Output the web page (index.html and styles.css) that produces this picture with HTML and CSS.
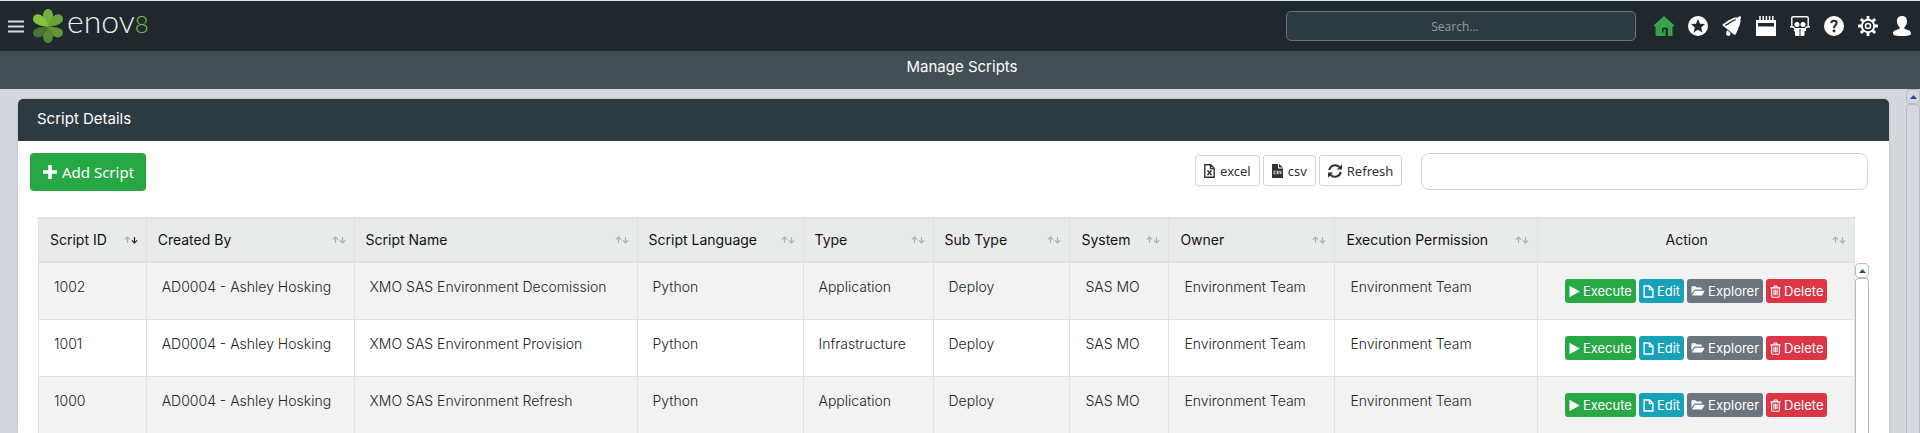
FILE: index.html
```html
<!DOCTYPE html>
<html lang="en">
<head>
<meta charset="utf-8">
<title>Manage Scripts</title>
<link rel="stylesheet" href="styles.css">
</head>
<body>
<svg class="defs" aria-hidden="true">
  <symbol id="play" viewBox="0 0 12 14"><path d="M.5.8v12.4L11.6 7z" fill="currentColor"/></symbol>
  <symbol id="file" viewBox="0 0 12 14"><path d="M1.2 1h6l3.6 3.7V13H1.2zM7 1v4h3.8" fill="none" stroke="currentColor" stroke-width="1.5"/></symbol>
  <symbol id="folder" viewBox="0 0 15 12"><path d="M.5 9V2q0-1 1-1h3.4l1.2 1.3h4.5q1 0 1 1v1.2H4.7q-1 0-1.600.8z" fill="currentColor"/><path d="M1 10.800 3.600 6.500q.4-.7 1.200-.7h9.200q.8 0 .4.7l-2.300 3.700q-.4.6-1.200.6z" fill="currentColor"/></symbol>
  <symbol id="trash" viewBox="0 0 12 14"><path d="M.5 3h11M3.800 2.800 4.600 1h2.800l.8 1.800M1.800 3v9q0 1.200 1 1.200h6.400q1 0 1-1.200V3M4.300 5.200v5.800M6 5.200v5.800M7.700 5.200v5.800" fill="none" stroke="currentColor" stroke-width="1.2"/></symbol>
  <symbol id="up" viewBox="0 0 14 8"><path d="M3.500 7V1M.8 3.600 3.500 1l2.700 2.600" fill="none" stroke="currentColor" stroke-width="1.2"/></symbol>
  <symbol id="down" viewBox="0 0 14 8"><path d="M10.500 1v6M7.800 4.400 10.500 7l2.700-2.600" fill="none" stroke="currentColor" stroke-width="1.2"/></symbol>
</svg>

<header class="topbar">
  <button class="menu" aria-label="Menu"><svg viewBox="0 0 16 13"><path d="M0 1.500h16M0 6.500h16M0 11.500h16" stroke="#dcdcde" stroke-width="2"/></svg></button>
  <a class="brand" href="#" aria-label="enov8 home">
    <svg class="flower" viewBox="0 0 30 34">
      <path d="M15 18C9 12 9.500 9 10.300 4.500 11-1.500 19-1.500 19.700 4.500 20.500 9 21 12 15 18z" fill="#74ad3b"/>
      <path d="M15 18C16 9 22 5.500 25 5.300 30 5.300 31.500 11 28.500 13.500 24 17 20 17 15 18z" fill="#6aa039"/>
      <path d="M15 18C20 17.500 25 18.500 28.500 20.500 31.500 23.500 29.500 28.500 25 28.500 20 28 17 24 15 18z" fill="#629538"/>
      <path d="M15 18C9 22 9.500 25 10.500 30 11.500 35.300 18.500 35.300 19.500 30 20.500 25 21 22 15 18z" fill="#578a36"/>
      <path d="M15 18C10 17.500 5 18.500 1.500 20.500-1.500 23.500.5 28.500 5 28.500 10 28 13 24 15 18z" fill="#4a7335"/>
      <path d="M15 18C14 9 8 5.500 5 5.300 0 5.300-1.500 11 1.500 13.500 6 17 10 17 15 18z" fill="#86c440"/>
    </svg>
    <span class="word">enov<span class="eight">8</span></span>
  </a>
  <input class="search" type="search" placeholder="Search..." aria-label="Search">
  <nav class="tools">
    <a class="home" href="#" aria-label="Home"><svg viewBox="0 0 20 20"><path fill="currentColor" d="M10 0 20 9v1.600h-1.500V20H14v-7q0-1.500-1.500-1.500h-3Q8 11.500 8 13v3.500h1.500V13.200h2V20H3q-1.500 0-1.500-1.500v-7.900H0V9z"/></svg></a>
    <a href="#" aria-label="Favourites"><svg viewBox="0 0 20 20"><circle cx="10" cy="10" r="10" fill="currentColor"/><path fill="#20282e" d="m10 3 2 4.700 5 .4-3.800 3.300 1.200 5L10 13.700l-4.400 2.700 1.200-5L3 8.100l5-.4z"/></svg></a>
    <a href="#" aria-label="Notifications"><svg viewBox="0 0 20 20"><path fill="currentColor" d="M.8 8.200C5 5.600 9.500 2 13.500 1.500q1.300-.3 2.300.2Q17-.2 18.600.4 19.800 1.400 18.300 3.200 19 5.500 17.600 9 16 13.500 13.800 18.200q-1.300 1-2.300 0L1 9.800Q.2 9 .8 8.200z"/><path d="M3.200 9.300C8 8 9.500 4.300 13.800 3.600" stroke="#20282e" stroke-width="1.300" fill="none"/><path fill="currentColor" d="m5.300 14.300 3.200 2.700q.2 2.700-2.200 3-2.300-.2-2.200-2.500.1-1.800 1.200-3.200z"/></svg></a>
    <a href="#" aria-label="Calendar"><svg viewBox="0 0 20 20"><path fill="currentColor" fill-rule="evenodd" d="M0 4h20v16H0zm2 3v3.500h16V7z"/><path d="M4 0v7M7.200 0v7M10.400 0v7M13.600 0v7M16.800 0v7" stroke="currentColor" stroke-width="1.500"/></svg></a>
    <a href="#" aria-label="Slides"><svg viewBox="0 0 20 20"><path fill="none" stroke="currentColor" stroke-width="1.400" d="M1.800 11V2q0-1.200 1.200-1.200h14q1.200 0 1.200 1.200v9M0 10.800q3.500 0 4.700 1.200M20 10.800q-3.500 0-4.700 1.200"/><circle cx="7" cy="8.500" r="2.500" fill="currentColor"/><circle cx="13" cy="8.500" r="2.500" fill="currentColor"/><path fill="currentColor" d="M4 12h12v3l-1.500.5V19q0 1-1.500 1h-2.500v-7h-1v7H6.500Q5 20 5 19v-3.500L4 15z"/></svg></a>
    <a href="#" aria-label="Help"><svg viewBox="0 0 20 20"><circle cx="10" cy="10" r="10" fill="currentColor"/><path d="M7.300 7.200Q7.500 4.800 10 4.800t2.600 2.200C12.600 9.200 10 9 10 12.200" fill="none" stroke="#20282e" stroke-width="2"/><circle cx="10" cy="15" r="1.400" fill="#20282e"/></svg></a>
    <a href="#" aria-label="Settings"><svg viewBox="0 0 20 20"><g fill="none" stroke="currentColor"><path stroke-width="2.800" d="M10 0v4M10 16v4M0 10h4M16 10h4M2.900 2.900l2.800 2.800M14.300 14.300l2.800 2.800M2.900 17.100l2.800-2.800M14.300 5.700l2.800-2.800"/><circle cx="10" cy="10" r="6.200" stroke-width="2"/><circle cx="10" cy="10" r="2.500" stroke-width="1.600"/></g></svg></a>
    <a href="#" aria-label="Account"><svg viewBox="0 0 20 20"><path fill="currentColor" d="M10 0c3.500 0 5 2.200 5 5.300 0 2.800-1.200 4.400-2.600 6.200v1.300C15 14 19 14.200 19 17.500 19 19.500 15 20 10 20s-9-.5-9-2.500c0-3.300 4-3.500 6.600-4.700v-1.300C6.200 9.700 5 8.100 5 5.300 5 2.200 6.500 0 10 0z"/></svg></a>
  </nav>
</header>
<h1 class="page-title">Manage Scripts</h1>

<div class="viewport">
  <main class="content">
    <section class="card">
      <h2 class="card-title">Script Details</h2>
      <div class="toolbar">
        <button class="add"><svg viewBox="0 0 14 14"><path d="M7 0v14M0 7h14" stroke="currentColor" stroke-width="3.600"/></svg>Add Script</button>
        <div class="exports">
          <button class="export"><svg class="doc" viewBox="0 0 11 14"><path d="M.8.8h6l3.400 3.500v8.900H.8zM6.500.8v3.800h3.700" fill="none" stroke="currentColor" stroke-width="1.400"/><path d="m3.500 6.300 4 5M7.500 6.300l-4 5" stroke="currentColor" stroke-width="1.400"/></svg>excel</button>
          <button class="export"><svg class="doc" viewBox="0 0 11 14"><path fill="currentColor" d="M0 0h6v4.500h5V14H0zM7 0l4 3.500H7z"/><path d="M3.700 7.200H2v2.600h1.700M6.500 7.200H5v1.300h1.300v1.300H4.800M7.600 7l.9 3 .9-3" fill="none" stroke="#fff" stroke-width=".8"/></svg>csv</button>
          <button class="export"><svg viewBox="0 0 14 14"><path d="M1.200 6A6 6 0 0 1 11.500 3.200M12.800 8A6 6 0 0 1 2.500 10.800" fill="none" stroke="currentColor" stroke-width="2"/><path fill="currentColor" d="M14 .3v5.200H8.800zM0 13.700V8.500h5.200z"/></svg>Refresh</button>
        </div>
        <input class="filter" type="text" aria-label="Filter scripts">
      </div>
      <div class="grid">
        <table class="scripts">
          <colgroup><col class="c-id"><col class="c-by"><col class="c-name"><col class="c-lang"><col class="c-type"><col class="c-sub"><col class="c-sys"><col class="c-own"><col class="c-perm"><col class="c-act"></colgroup>
          <thead>
            <tr>
              <th><div class="head">Script ID<svg class="sort"><use href="#up"/><use class="on" href="#down"/></svg></div></th>
              <th><div class="head">Created By<svg class="sort"><use href="#up"/><use href="#down"/></svg></div></th>
              <th><div class="head">Script Name<svg class="sort"><use href="#up"/><use href="#down"/></svg></div></th>
              <th><div class="head">Script Language<svg class="sort"><use href="#up"/><use href="#down"/></svg></div></th>
              <th><div class="head">Type<svg class="sort"><use href="#up"/><use href="#down"/></svg></div></th>
              <th><div class="head">Sub Type<svg class="sort"><use href="#up"/><use href="#down"/></svg></div></th>
              <th><div class="head">System<svg class="sort"><use href="#up"/><use href="#down"/></svg></div></th>
              <th><div class="head">Owner<svg class="sort"><use href="#up"/><use href="#down"/></svg></div></th>
              <th><div class="head">Execution Permission<svg class="sort"><use href="#up"/><use href="#down"/></svg></div></th>
              <th><div class="head"><span class="mid">Action</span><svg class="sort"><use href="#up"/><use href="#down"/></svg></div></th>
            </tr>
          </thead>
          <tbody>
            <tr><td>1002</td><td>AD0004 - Ashley Hosking</td><td>XMO SAS Environment Decomission</td><td>Python</td><td>Application</td><td>Deploy</td><td>SAS MO</td><td>Environment Team</td><td>Environment Team</td>
              <td class="act"><div class="actions"><button class="go"><svg class="n"><use href="#play"/></svg>Execute</button><button class="edit"><svg class="n"><use href="#file"/></svg>Edit</button><button class="explore"><svg class="w"><use href="#folder"/></svg>Explorer</button><button class="del"><svg class="n"><use href="#trash"/></svg>Delete</button></div></td></tr>
            <tr><td>1001</td><td>AD0004 - Ashley Hosking</td><td>XMO SAS Environment Provision</td><td>Python</td><td>Infrastructure</td><td>Deploy</td><td>SAS MO</td><td>Environment Team</td><td>Environment Team</td>
              <td class="act"><div class="actions"><button class="go"><svg class="n"><use href="#play"/></svg>Execute</button><button class="edit"><svg class="n"><use href="#file"/></svg>Edit</button><button class="explore"><svg class="w"><use href="#folder"/></svg>Explorer</button><button class="del"><svg class="n"><use href="#trash"/></svg>Delete</button></div></td></tr>
            <tr><td>1000</td><td>AD0004 - Ashley Hosking</td><td>XMO SAS Environment Refresh</td><td>Python</td><td>Application</td><td>Deploy</td><td>SAS MO</td><td>Environment Team</td><td>Environment Team</td>
              <td class="act"><div class="actions"><button class="go"><svg class="n"><use href="#play"/></svg>Execute</button><button class="edit"><svg class="n"><use href="#file"/></svg>Edit</button><button class="explore"><svg class="w"><use href="#folder"/></svg>Explorer</button><button class="del"><svg class="n"><use href="#trash"/></svg>Delete</button></div></td></tr>
          </tbody>
        </table>
        <div class="scroller inner"><span class="arrow"><svg viewBox="0 0 7 4"><path d="M3.500 0 7 4H0z" fill="#1f4e9c"/></svg></span><span class="thumb"></span></div>
      </div>
    </section>
  </main>
  <div class="scroller outer"><span class="arrow"><svg viewBox="0 0 7 4"><path d="M3.500 0 7 4H0z" fill="#1f4e9c"/></svg></span><span class="thumb"></span></div>
</div>
</body>
</html>
```
FILE: styles.css
```css
* { box-sizing: border-box; }
body {
  margin: 0;
  height: 100vh;
  display: flex;
  flex-direction: column;
  overflow: hidden;
  background: #d4d7dc;
  color: #212529;
  font: 14px/24px Inter, "Open Sans", sans-serif;
}
button, input { font: inherit; color: inherit; margin: 0; }
button { border: 0; cursor: pointer; white-space: nowrap; }
svg { display: block; flex: none; }
.defs { position: absolute; width: 0; height: 0; }

.topbar {
  display: flex;
  align-items: center;
  height: 51px;
  flex: none;
  padding: 0 8px;
  background: #20282e;
  border-top: 1px solid #dfe5e6;
  box-shadow: inset 0 3px 3px #1c2f2e;
}
.menu { padding: 0; background: none; }
.menu svg { width: 16px; height: 13px; }
.brand { display: flex; align-items: center; gap: 4px; margin-left: 9px; color: #eceeef; text-decoration: none; }
.flower { width: 30px; height: 34px; }
.word { font: 300 32px/34px Lato, sans-serif; padding-bottom: 8px; }
.eight { font-size: 24px; color: #7dba3e; }
.search {
  width: 350px;
  height: 30px;
  margin-left: auto;
  padding: 0 8px;
  border: 1px solid #66757b;
  border-radius: 5px;
  background: #2d3a41;
  text-align: center;
  font: 12px/20px "Open Sans", sans-serif;
  color: #fff;
}
.search::placeholder { color: #969a9c; opacity: 1; }
.tools { display: flex; gap: 14px; margin-left: 18px; color: #fff; }
.tools a { color: inherit; }
.tools .home { color: #35a347; }
.tools svg { width: 20px; height: 20px; }

.page-title {
  flex: none;
  margin: 0;
  height: 38px;
  padding: 4px 0 0 4px;
  background: #424e54;
  color: #fff;
  text-align: center;
  font-size: 15px;
  line-height: 24px;
  font-weight: 400;
}

.viewport { flex: 1; min-height: 0; display: flex; }
.content { flex: 1; min-width: 0; display: flex; padding: 10px 17px 0 18px; }
.card {
  flex: 1;
  min-width: 0;
  background: #fff;
  border-radius: 5px 5px 0 0;
  box-shadow: 0 0 2px #a3a8ad;
}
.card-title {
  margin: 0;
  padding: 8px 19px 10px;
  border-radius: 5px 5px 0 0;
  background: #2d3a41;
  color: #fff;
  font-size: 15px;
  line-height: 24px;
  font-weight: 400;
}
.toolbar { display: flex; align-items: flex-start; padding: 12px 21px 0 12px; }
.add {
  display: flex;
  align-items: center;
  gap: 5px;
  height: 38px;
  padding: 0 12px 0 13px;
  border-radius: 4px;
  background: #28a745;
  color: #fff;
  font: 15px/24px "Noto Sans", sans-serif;
}
.add svg { width: 14px; height: 14px; }
.exports { display: flex; gap: 3px; margin: 2px 19px 0 auto; }
.export {
  display: flex;
  align-items: center;
  gap: 5px;
  height: 31px;
  padding: 0 8px;
  border: 1px solid #d0d5db;
  border-radius: 3px;
  background: #fff;
  color: #333;
  font: 13px/20px "Noto Sans", sans-serif;
}
.export svg { width: 14px; height: 14px; }
.export .doc { width: 11px; }
.filter {
  width: 24.3%;
  height: 37px;
  padding: 0 12px;
  border: 1px solid #ced2d8;
  border-radius: 8px;
  background: #fff;
}

.grid { display: flex; align-items: stretch; padding: 26px 20px 0; }
.scripts {
  flex: 1;
  min-width: 0;
  table-layout: fixed;
  border-collapse: separate;
  border-spacing: 0;
  border-left: 1px solid #dee2e6;
}
.c-id { width: 5.93%; }
.c-by { width: 11.45%; }
.c-name { width: 15.58%; }
.c-lang { width: 9.14%; }
.c-type { width: 7.16%; }
.c-sub { width: 7.54%; }
.c-sys { width: 5.45%; }
.c-own { width: 9.14%; }
.c-perm { width: 11.18%; }
.c-act { width: 17.43%; }
.scripts th {
  height: 46px;
  padding: 0 8px 0 11px;
  border: solid #dee2e6;
  border-width: 2px 1px 2px 0;
  background: #e9ebeb;
  color: #111;
  font-weight: 400;
  text-align: left;
}
.head { display: flex; align-items: center; justify-content: space-between; white-space: nowrap; }
.mid { flex: 1; padding-right: 8px; text-align: center; }
.sort { width: 14px; height: 8px; color: #adb0b2; }
.sort .on { color: #222; }
.scripts td {
  height: 57px;
  padding: 12px 8px 0 15px;
  border: solid #dee2e6;
  border-width: 0 1px 1px 0;
  vertical-align: top;
  white-space: nowrap;
  font-weight: 300;
}
.scripts tbody tr:nth-child(odd) { background: #f2f2f2; }
.scripts td.act { padding: 0; vertical-align: middle; }
.actions { display: flex; justify-content: center; gap: 3px; }
.actions button {
  display: flex;
  align-items: center;
  gap: 3px;
  height: 24px;
  padding: 0 4px;
  border-radius: 3px;
  color: #fff;
  font-size: 13px;
  font-weight: 400;
}
.actions .n { width: 11px; height: 13px; }
.actions .w { width: 14px; height: 12px; }
.go { background: #28a745; }
.edit { background: #17a2b8; }
.explore { background: #6c757d; }
.del { background: #dc3545; }

.scroller { display: flex; flex-direction: column; flex: none; width: 14px; }
.inner { padding-top: 46px; }
.arrow, .thumb { border: 1px solid #b9bdc2; border-radius: 4px; }
.arrow { display: flex; align-items: center; justify-content: center; height: 15px; }
.arrow svg { width: 7px; height: 4px; }
.thumb { flex: 1; border-bottom: 0; border-radius: 4px 4px 0 0; }
```
